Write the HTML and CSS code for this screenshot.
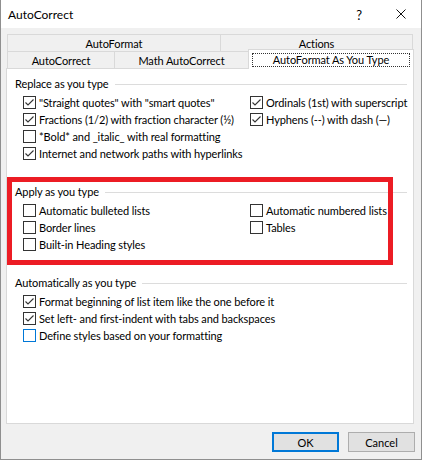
FILE: index.html
```html
<!DOCTYPE html>
<html>
<head>
<meta charset="utf-8">
<title>AutoCorrect</title>
<link rel="stylesheet" href="styles.css">
</head>
<body>
<div class="window">
  <div class="titlebar">
    <span class="title">AutoCorrect</span>
    <span class="help">?</span>
    <span class="close"><svg width="10" height="10" viewBox="0 0 10 10"><path d="M0.5 0.5 L9.5 9.5 M9.5 0.5 L0.5 9.5" stroke="#111" stroke-width="1" fill="none"/></svg></span>
  </div>
  <div class="client">
    <div class="tabs">
      <div class="tabrow">
        <div class="tab t-af">AutoFormat</div>
        <div class="tab t-act">Actions</div>
      </div>
      <div class="tabrow">
        <div class="tab t-ac">AutoCorrect</div>
        <div class="tab t-math">Math AutoCorrect</div>
        <div class="tab t-sel"><span class="focus">AutoFormat As You Type</span></div>
      </div>
    </div>
    <div class="panel">
      <div class="group">
        <div class="glabel"><span>Replace as you type</span><i class="gline"></i></div>
        <div class="grid">
          <label class="item"><svg class="cb" viewBox="0 0 13 13"><rect x="0.5" y="0.5" width="12" height="12" class="box"/><path d="M2.5 6.5 L5 9 L10.5 3.5" class="tick"/></svg><span>"Straight quotes" with "smart quotes"</span></label>
          <label class="item"><svg class="cb" viewBox="0 0 13 13"><rect x="0.5" y="0.5" width="12" height="12" class="box"/><path d="M2.5 6.5 L5 9 L10.5 3.5" class="tick"/></svg><span>Ordinals (1st) with superscript</span></label>
          <label class="item"><svg class="cb" viewBox="0 0 13 13"><rect x="0.5" y="0.5" width="12" height="12" class="box"/><path d="M2.5 6.5 L5 9 L10.5 3.5" class="tick"/></svg><span>Fractions (1/2) with fraction character (½)</span></label>
          <label class="item"><svg class="cb" viewBox="0 0 13 13"><rect x="0.5" y="0.5" width="12" height="12" class="box"/><path d="M2.5 6.5 L5 9 L10.5 3.5" class="tick"/></svg><span>Hyphens (--) with dash (—)</span></label>
          <label class="item full"><svg class="cb" viewBox="0 0 13 13"><rect x="0.5" y="0.5" width="12" height="12" class="box"/></svg><span>*Bold* and _italic_ with real formatting</span></label>
          <label class="item full"><svg class="cb" viewBox="0 0 13 13"><rect x="0.5" y="0.5" width="12" height="12" class="box"/><path d="M2.5 6.5 L5 9 L10.5 3.5" class="tick"/></svg><span>Internet and network paths with hyperlinks</span></label>
        </div>
      </div>
      <div class="group">
        <div class="glabel"><span>Apply as you type</span><i class="gline"></i></div>
        <div class="grid">
          <label class="item"><svg class="cb" viewBox="0 0 13 13"><rect x="0.5" y="0.5" width="12" height="12" class="box"/></svg><span>Automatic bulleted lists</span></label>
          <label class="item"><svg class="cb" viewBox="0 0 13 13"><rect x="0.5" y="0.5" width="12" height="12" class="box"/></svg><span>Automatic numbered lists</span></label>
          <label class="item"><svg class="cb" viewBox="0 0 13 13"><rect x="0.5" y="0.5" width="12" height="12" class="box"/></svg><span>Border lines</span></label>
          <label class="item"><svg class="cb" viewBox="0 0 13 13"><rect x="0.5" y="0.5" width="12" height="12" class="box"/></svg><span>Tables</span></label>
          <label class="item full"><svg class="cb" viewBox="0 0 13 13"><rect x="0.5" y="0.5" width="12" height="12" class="box"/></svg><span>Built-in Heading styles</span></label>
        </div>
      </div>
      <div class="group">
        <div class="glabel"><span>Automatically as you type</span><i class="gline"></i></div>
        <div class="grid">
          <label class="item full"><svg class="cb" viewBox="0 0 13 13"><rect x="0.5" y="0.5" width="12" height="12" class="box"/><path d="M2.5 6.5 L5 9 L10.5 3.5" class="tick"/></svg><span>Format beginning of list item like the one before it</span></label>
          <label class="item full"><svg class="cb" viewBox="0 0 13 13"><rect x="0.5" y="0.5" width="12" height="12" class="box"/><path d="M2.5 6.5 L5 9 L10.5 3.5" class="tick"/></svg><span>Set left- and first-indent with tabs and backspaces</span></label>
          <label class="item full"><svg class="cb hot" viewBox="0 0 13 13"><rect x="0.5" y="0.5" width="12" height="12" class="box"/></svg><span>Define styles based on your formatting</span></label>
        </div>
      </div>
      <div class="highlight"></div>
    </div>
    <div class="buttons">
      <button class="btn default">OK</button>
      <button class="btn">Cancel</button>
    </div>
  </div>
</div>
</body>
</html>
```
FILE: styles.css
```css
* { box-sizing: border-box; }
html, body { margin: 0; padding: 0; background: #f0f0f0; }
body {
  font-family: Lato, "Noto Sans", sans-serif;
  font-size: 11px;
  letter-spacing: -0.1px;
  color: #000;
}
.window {
  width: 422px;
  height: 460px;
  border-left: 1px solid #8f8f8f;
  border-right: 1px solid #8f8f8f;
  border-bottom: 1px solid #8f8f8f;
  background: #f0f0f0;
  display: flex;
  flex-direction: column;
}
.titlebar {
  height: 28px;
  background: #fff;
  display: flex;
  align-items: center;
  padding-left: 7px;
  flex: none;
}
.title { flex: 1; font-size: 12px; letter-spacing: 0; }
.help {
  width: 24px;
  text-align: center;
  font-size: 13px;
  margin-right: 10px;
  padding-top: 1px;
}
.close {
  width: 40px;
  height: 28px;
  display: flex;
  align-items: center;
  justify-content: center;
}
.client {
  flex: 1;
  display: flex;
  flex-direction: column;
  padding: 6px 6px 0 5px;
}
.tabs { margin-left: 1px; }
.tabrow { display: flex; height: 17px; }
.tab {
  height: 17px;
  border: 1px solid #d9d9d9;
  border-bottom: none;
  background: #f0f0f0;
  display: flex;
  align-items: center;
  justify-content: center;
  line-height: 15px;
  white-space: nowrap;
}
.tab + .tab { margin-left: -1px; }
.t-af { width: 214px; }
.t-act { width: 193px; }
.t-ac { width: 108px; }
.t-math { width: 135px; }
.t-sel {
  width: 166px;
  height: 20px;
  margin-top: -2px;
  background: #fff;
  position: relative;
  z-index: 1;
  align-items: flex-start;
  padding-top: 3px;
}
.focus {
  display: block;
  width: 158px;
  height: 14px;
  border: 1px dotted #333;
  text-align: center;
  line-height: 12px;
}
.panel {
  position: relative;
  width: 408px;
  height: 356px;
  background: #fff;
  border: 1px solid #d9d9d9;
  padding: 0 6px 0 8px;
  flex: none;
}
.group { margin-top: 22px; }
.group:first-child { margin-top: 7px; }
.glabel {
  display: flex;
  align-items: center;
  height: 16px;
  line-height: 16px;
  white-space: nowrap;
}
.gline {
  flex: 1;
  height: 1px;
  background: #dcdcdc;
  margin-left: 6px;
  margin-top: 1px;
}
.grid {
  display: grid;
  grid-template-columns: 227px 1fr;
  margin: 2px 0 0 8px;
}
.item {
  display: flex;
  align-items: center;
  height: 17px;
  gap: 3px;
  white-space: nowrap;
}
.item.full { grid-column: 1 / -1; }
.cb { width: 13px; height: 13px; flex: none; }
.cb .box { fill: #fff; stroke: #333; stroke-width: 1; }
.cb.hot .box { stroke: #0078d7; }
.cb .tick { fill: none; stroke: #333; stroke-width: 1.1; }
.highlight {
  position: absolute;
  left: 0;
  top: 108px;
  width: 386px;
  height: 88px;
  border: 5px solid #ec1c24;
  pointer-events: none;
}
.buttons {
  display: flex;
  justify-content: flex-end;
  gap: 9px;
  margin-top: 8px;
  padding-right: 0;
}
.btn {
  width: 67px;
  height: 20px;
  background: #e1e1e1;
  border: 1px solid #adadad;
  font: inherit;
  color: #000;
  padding: 0;
  margin: 0;
}
.btn.default { border: 2px solid #0078d7; }
```
